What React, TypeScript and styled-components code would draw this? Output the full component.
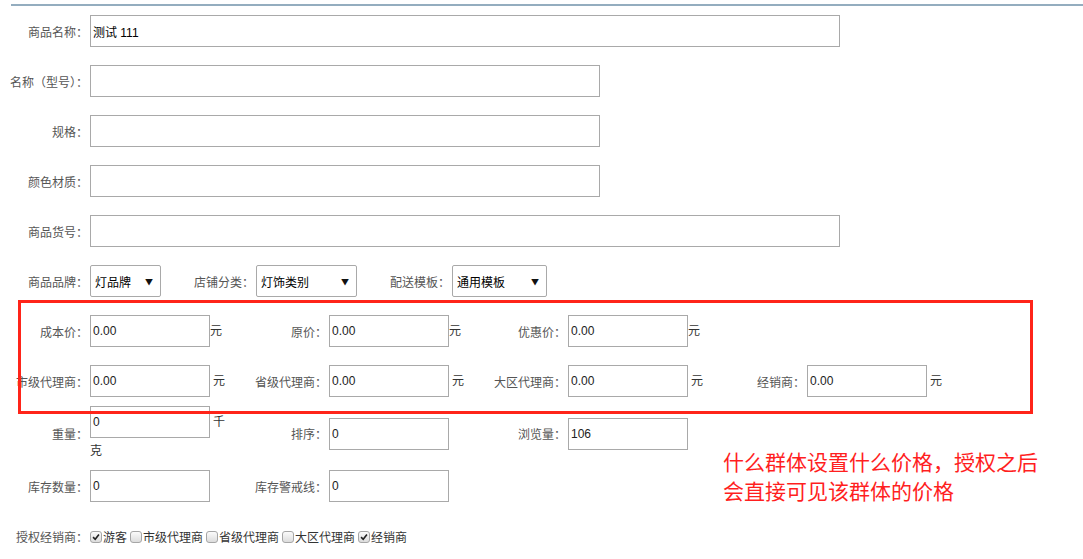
import React from 'react'
import styled, { createGlobalStyle } from 'styled-components'

const GlobalStyle = createGlobalStyle`
    html, body {
        margin: 0;
        padding: 0;
        background: #fff;
    }
    body {
        font-family: "Liberation Sans", "Noto Sans CJK SC", sans-serif;
        font-size: 12px;
        color: #333;
    }
`

const SPage = styled.div`
    position: relative;
    width: 1083px;
    height: 559px;
    overflow: hidden;
`

const STopLine = styled.div`
    margin: 4px 0 0 11px;
    height: 2px;
    background-color: #94adbf;
`

const SRow = styled.div<{ $pad?: string }>`
    display: flex;
    align-items: center;
    padding: ${props => props.$pad || '9px 0'};
`

const SField = styled.div<{ $w?: number }>`
    display: flex;
    align-items: center;
    width: ${props => (props.$w ? props.$w + 'px' : 'auto')};
    flex-shrink: 0;
`

const SLabel = styled.label<{ $w?: number }>`
    width: ${props => props.$w || 88}px;
    margin-right: 2px;
    text-align: right;
    white-space: nowrap;
    font-size: 12px;
    color: #555;
    flex-shrink: 0;
`

const SInput = styled.input<{ $w: number }>`
    width: ${props => props.$w}px;
    height: 32px;
    box-sizing: border-box;
    border: 1px solid #a9a9a9;
    padding: 0 2px;
    margin: 0;
    font-family: "Liberation Sans", "Noto Sans CJK SC", sans-serif;
    font-size: 12px;
    color: #222;
    background: #fff;
    outline: none;
    flex-shrink: 0;
`

const SUnit = styled.span<{ $gap?: number, $block?: boolean }>`
    margin-left: ${props => props.$gap || 0}px;
    font-size: 12px;
    color: #333;
    line-height: 20px;
    ${props => props.$block && `
        width: 100%;
        margin-left: 0;
        margin-top: 3px;
    `}
`

const SWeightBox = styled.div`
    display: flex;
    flex-wrap: wrap;
    align-items: center;
    width: 136px;
`

const SSelect = styled.div<{ $w: number }>`
    width: ${props => props.$w}px;
    height: 32px;
    box-sizing: border-box;
    border: 1px solid #a9a9a9;
    border-radius: 2px;
    padding: 0 7px 0 4px;
    display: flex;
    align-items: center;
    justify-content: space-between;
    font-family: "Noto Sans CJK SC", sans-serif;
    font-size: 12px;
    color: #000;
    background: #fff;
    flex-shrink: 0;
`

const SArrow = styled.span`
    font-size: 8px;
    color: #111;
`

const SChecks = styled.div`
    display: flex;
    align-items: center;
`

const SCheckItem = styled.span`
    display: flex;
    align-items: center;
    margin-right: 3px;
    font-size: 12px;
    color: #333;
`

const SBox = styled.span`
    width: 12px;
    height: 12px;
    box-sizing: border-box;
    margin-right: 1px;
    border: 1px solid #a6a6a6;
    border-radius: 3px;
    background: linear-gradient(#fbfbfb, #dcdcdc);
    display: flex;
    align-items: center;
    justify-content: center;
`

const SMarkBox = styled.div`
    position: absolute;
    left: 18px;
    top: 300px;
    width: 1015px;
    height: 114px;
    box-sizing: border-box;
    border: 3px solid #ff2419;
    pointer-events: none;
`

const SNote = styled.div`
    position: absolute;
    left: 723px;
    top: 447px;
    font-family: "Noto Sans CJK SC", sans-serif;
    font-size: 21px;
    line-height: 29px;
    color: #ff1f1f;
`

type Item = { label: string, value: string, unit?: string, gap?: number }

const PriceField = ({ label, value, unit, gap }: Item) => (
    <SField $w={239}>
        <SLabel>{label}</SLabel>
        <SInput $w={120} defaultValue={value} />
        {unit && <SUnit $gap={gap}>{unit}</SUnit>}
    </SField>
)

const Check = ({ on, text }: { on?: boolean, text: string }) => (
    <SCheckItem>
        <SBox>
            {on && (
                <svg width="8" height="8" viewBox="0 0 9 9">
                    <path d="M1.2 4.6 L3.6 7 L7.8 1.6" fill="none" stroke="#222" strokeWidth="1.8" />
                </svg>
            )}
        </SBox>
        {text}
    </SCheckItem>
)

const App = () => {
    return (
        <SPage>
            <GlobalStyle />
            <STopLine />

            <SRow>
                <SLabel>商品名称：</SLabel>
                <SInput $w={750} defaultValue="测试 111" style={{ color: '#000' }} />
            </SRow>
            <SRow>
                <SLabel>名称（型号）：</SLabel>
                <SInput $w={510} defaultValue="" />
            </SRow>
            <SRow>
                <SLabel>规格：</SLabel>
                <SInput $w={510} defaultValue="" />
            </SRow>
            <SRow>
                <SLabel>颜色材质：</SLabel>
                <SInput $w={510} defaultValue="" />
            </SRow>
            <SRow>
                <SLabel>商品货号：</SLabel>
                <SInput $w={750} defaultValue="" />
            </SRow>

            <SRow>
                <SLabel>商品品牌：</SLabel>
                <SSelect $w={71}>灯品牌<SArrow>▼</SArrow></SSelect>
                <SLabel $w={93}>店铺分类：</SLabel>
                <SSelect $w={101}>灯饰类别<SArrow>▼</SArrow></SSelect>
                <SLabel $w={93}>配送模板：</SLabel>
                <SSelect $w={95}>通用模板<SArrow>▼</SArrow></SSelect>
            </SRow>

            <SRow>
                <PriceField label="成本价：" value="0.00" unit="元" />
                <PriceField label="原价：" value="0.00" unit="元" />
                <PriceField label="优惠价：" value="0.00" unit="元" />
            </SRow>
            <SRow>
                <PriceField label="市级代理商：" value="0.00" unit="元" gap={3} />
                <PriceField label="省级代理商：" value="0.00" unit="元" gap={3} />
                <PriceField label="大区代理商：" value="0.00" unit="元" gap={3} />
                <PriceField label="经销商：" value="0.00" unit="元" gap={3} />
            </SRow>

            <SRow $pad="0">
                <SField $w={239}>
                    <SLabel>重量：</SLabel>
                    <SWeightBox>
                        <SInput $w={120} defaultValue="0" />
                        <SUnit $gap={3}>千</SUnit>
                        <SUnit $block>克</SUnit>
                    </SWeightBox>
                </SField>
                <PriceField label="排序：" value="0" />
                <PriceField label="浏览量：" value="106" />
            </SRow>

            <SRow>
                <PriceField label="库存数量：" value="0" />
                <PriceField label="库存警戒线：" value="0" />
            </SRow>

            <SRow $pad="17px 0">
                <SLabel>授权经销商：</SLabel>
                <SChecks>
                    <Check on text="游客" />
                    <Check text="市级代理商" />
                    <Check text="省级代理商" />
                    <Check text="大区代理商" />
                    <Check on text="经销商" />
                </SChecks>
            </SRow>

            <SMarkBox />
            <SNote>
                什么群体设置什么价格，授权之后<br />
                会直接可见该群体的价格
            </SNote>
        </SPage>
    )
}

export default App
